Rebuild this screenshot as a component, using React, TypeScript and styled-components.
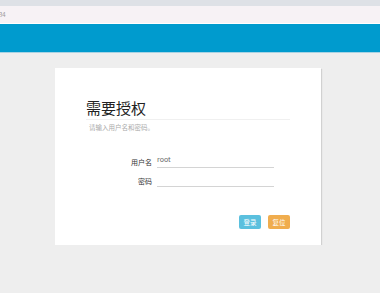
import * as React from "react"
import styled, { createGlobalStyle } from "styled-components"

const GlobalStyle = createGlobalStyle`
  html, body {
    margin: 0;
    padding: 0;
    background: #eeeeee;
    font-family: "Noto Sans CJK SC", "Noto Sans", "Liberation Sans", sans-serif;
  }
`

const TabStrip = styled.div`
  height: 6px;
  background: #dee1e6;
`

const AddressBar = styled.div`
  height: 17px;
  background: #f7f2f5;
  border-bottom: 1px solid #ffffff;
  display: flex;
  align-items: center;
  font-size: 6px;
  color: #999;
  span {
    margin-left: -1px;
  }
`

const NavBar = styled.div`
  height: 28px;
  background: #009bce;
  box-shadow: 0 1px 0 #a9d3e3;
  margin-bottom: 1px;
`

const Main = styled.div`
  padding: 15px 0 0 55px;
`

const Card = styled.div`
  box-sizing: border-box;
  width: 266px;
  height: 177px;
  background: #fff;
  box-shadow: 1px 1px 1px rgba(0, 0, 0, 0.12);
  padding: 31px 31px 0;
`

const Header = styled.div`
  width: 204px;
  border-bottom: 1px solid #f0f0f0;
`

const Title = styled.h1`
  margin: 0 0 2px;
  font-size: 15px;
  line-height: 18px;
  font-weight: normal;
  color: #222;
`

const Subtitle = styled.p`
  margin: 3px 0 0 3px;
  font-size: 6.5px;
  line-height: 8px;
  color: #aaa;
`

const Form = styled.div`
  margin-top: 24px;
  display: grid;
  grid-template-columns: 66px 117px;
  column-gap: 5px;
  row-gap: 6px;
`

const Label = styled.label`
  text-align: right;
  align-self: center;
  font-size: 7px;
  line-height: 9px;
  color: #333;
  padding-top: 1px;
`

const Input = styled.div`
  box-sizing: border-box;
  height: 13px;
  border-bottom: 1.5px solid #d4d4d4;
  font-size: 7px;
  line-height: 9px;
  color: #666;
`

const Actions = styled.div`
  width: 204px;
  margin-top: 28px;
  display: flex;
  justify-content: flex-end;
  gap: 7px;
`

const Button = styled.button<{ $tone: "info" | "warning" }>`
  width: 22px;
  height: 14px;
  padding: 0;
  border: none;
  border-radius: 2px;
  background: ${p => (p.$tone === "info" ? "#5bc0de" : "#f0ad4e")};
  color: #fff;
  font-family: inherit;
  font-size: 6.5px;
  line-height: 14px;
`

const fields = [
  { label: "用户名", value: "root" },
  { label: "密码", value: "" }
]

export default function App() {
  return (
    <>
      <GlobalStyle />
      <TabStrip />
      <AddressBar>
        <span>34</span>
      </AddressBar>
      <NavBar />
      <Main>
        <Card>
          <Header>
            <Title>需要授权</Title>
          </Header>
          <Subtitle>请输入用户名和密码。</Subtitle>
          <Form>
            {fields.map(f => (
              <React.Fragment key={f.label}>
                <Label>{f.label}</Label>
                <Input>{f.value}</Input>
              </React.Fragment>
            ))}
          </Form>
          <Actions>
            <Button $tone="info">登录</Button>
            <Button $tone="warning">复位</Button>
          </Actions>
        </Card>
      </Main>
    </>
  )
}
